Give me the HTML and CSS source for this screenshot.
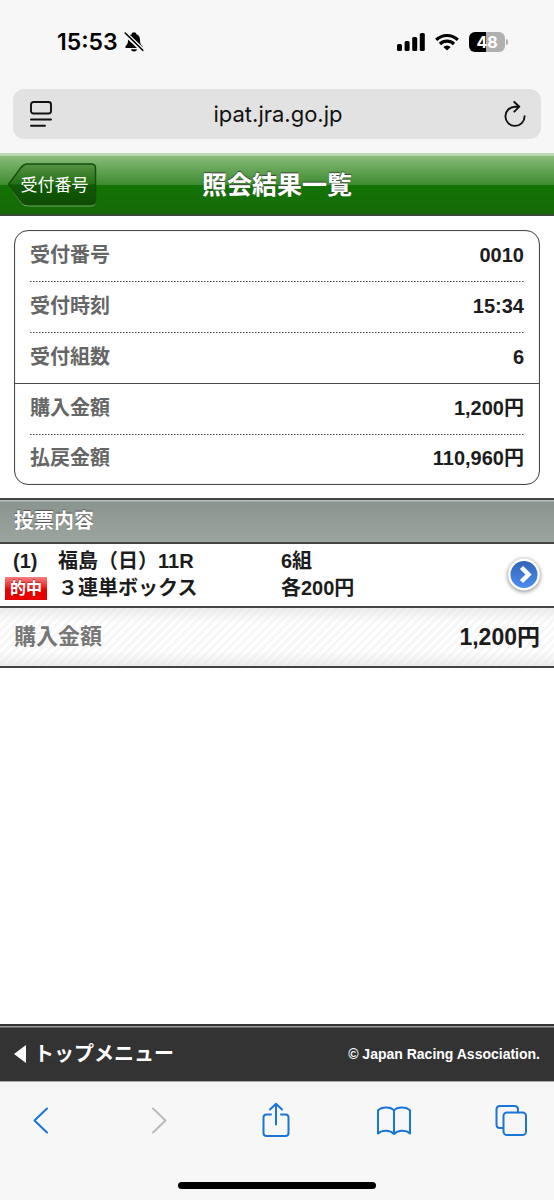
FILE: index.html
```html
<!DOCTYPE html>
<html lang="ja">
<head>
<meta charset="utf-8">
<meta name="viewport" content="width=device-width, initial-scale=1">
<title>照会結果一覧</title>
<link rel="stylesheet" href="styles.css">
</head>
<body class="screen">
<div class="status">
  <div class="status-group">
    <span class="clock">15:53</span>
    <svg class="bell" width="20" height="22" viewBox="0 0 20 22" aria-hidden="true">
      <path d="M10 1.200c-1.300 0-2.200.8-2.400 2C5 4 4 6.200 4 9c0 3.400-.8 4.600-2.300 6-.9.900-.6 2 .6 2h15.400c1.200 0 1.500-1.100.6-2-1.500-1.400-2.300-2.600-2.300-6 0-2.800-1-5-3.600-5.800-.2-1.200-1.100-2-2.400-2z"/>
      <path d="M7 18.300h6c-.3 1.500-1.400 2.200-3 2.200s-2.700-.7-3-2.200z"/>
      <path d="M1 2.500 19 19.500" stroke="#f7f7f7" stroke-width="4.500"/>
      <path d="M1.200 2 18.800 19.300" stroke="#000" stroke-width="1.600" stroke-linecap="round"/>
    </svg>
  </div>
  <div class="status-group status-right">
    <svg width="28" height="18" viewBox="0 0 28 18" aria-hidden="true">
      <rect x="0" y="11" width="5" height="7" rx="1.500"/><rect x="7.600" y="8" width="5" height="10" rx="1.500"/><rect x="15.200" y="4" width="5" height="14" rx="1.500"/><rect x="22.800" y="0" width="5" height="18" rx="1.500"/>
    </svg>
    <svg width="24" height="18" viewBox="0 0 24 18" aria-hidden="true">
      <g fill="none" stroke="#000" stroke-width="3.200"><path d="M1.200 6.900a15.500 15.500 0 0 1 21.600 0"/><path d="M5 11a10 10 0 0 1 14 0"/></g>
      <path d="M12 17.600 8.300 14a5.300 5.300 0 0 1 7.400 0z"/>
    </svg>
    <div class="battery"><span class="battery-level">48</span><span class="battery-cap"></span></div>
  </div>
</div>
<div class="address">
  <button class="plain" aria-label="ページ設定">
    <svg width="22" height="26" viewBox="0 0 22 26" fill="none" stroke="#111" stroke-width="1.900" stroke-linecap="round"><rect x="1" y="1" width="20" height="11.500" rx="2.500"/><path d="M1 18.500h20M1 24.800h14"/></svg>
  </button>
  <span class="domain">ipat.jra.go.jp</span>
  <button class="plain" aria-label="再読み込み">
    <svg width="22" height="26" viewBox="0 0 22 26" fill="none" stroke="#111" stroke-width="1.900" stroke-linecap="round" stroke-linejoin="round"><path d="M14.800 5.700H11A9.600 9.600 0 1 0 20.600 15.300M10.300 1l5 4.700-5 5"/></svg>
  </button>
</div>
<header class="titlebar">
  <button class="back">
    <svg class="back-shape" width="90" height="44" viewBox="0 0 90 44" aria-hidden="true">
      <defs><linearGradient id="back-fill" x2="0" y2="1"><stop offset="0" stop-color="#579345"/><stop offset=".5" stop-color="#236f12"/><stop offset=".51" stop-color="#125a06"/><stop offset="1" stop-color="#0d4c04"/></linearGradient></defs>
      <path d="M2 22.500 14 5.500Q17 2 20 2H84Q88.500 2 88.500 6V38.500Q88.500 43 84 43H20Q17 43 14 39.500Z" fill="none" stroke="#75aa65" stroke-width="1"/>
      <path d="M1.500 21.500 14 4.500Q17 1 20 1H84Q88.500 1 88.500 5V37.500Q88.500 41.500 84 41.500H20Q17 41.500 14 38Z" fill="url(#back-fill)" stroke="#174d0d" stroke-width="1.500"/>
    </svg>
    <span class="back-label">受付番号</span>
  </button>
  <h1 class="title">照会結果一覧</h1>
</header>
<main class="content">
  <dl class="summary">
    <div class="item"><dt class="key">受付番号</dt><dd class="value">0010</dd></div>
    <div class="item"><dt class="key">受付時刻</dt><dd class="value">15:34</dd></div>
    <div class="item"><dt class="key">受付組数</dt><dd class="value">6</dd></div>
    <div class="item item-split"><dt class="key">購入金額</dt><dd class="value">1,200円</dd></div>
    <div class="item"><dt class="key">払戻金額</dt><dd class="value">110,960円</dd></div>
  </dl>
  <h2 class="section">投票内容</h2>
  <a class="bet" href="#">
    <span class="bet-mark"><span class="bet-number">(1)</span><span class="hit">的中</span></span>
    <span class="bet-name"><span>福島（日）11R</span><span>３連単ボックス</span></span>
    <span class="bet-stake"><span>6組</span><span>各200円</span></span>
    <svg class="go" width="38" height="38" viewBox="0 0 38 38" aria-hidden="true">
      <defs><linearGradient id="go-fill" x2="0" y2="1"><stop offset="0" stop-color="#3364b8"/><stop offset="1" stop-color="#4b8df0"/></linearGradient></defs>
      <circle cx="19" cy="18.500" r="16" fill="#fff"/>
      <circle cx="19" cy="18.500" r="13.500" fill="url(#go-fill)"/>
      <path d="M16.500 11.500 23.500 18.500 16.500 25.500" fill="none" stroke="#fff" stroke-width="4.500"/>
    </svg>
  </a>
  <div class="total"><span class="total-key">購入金額</span><span>1,200円</span></div>
</main>
<footer class="footer">
  <a class="top-link" href="#"><svg width="12" height="18" viewBox="0 0 12 18" aria-hidden="true"><path d="M0 9 12 0v18z" fill="#fff"/></svg>トップメニュー</a>
  <small class="copyright">© Japan Racing Association.</small>
</footer>
<nav class="toolbar">
  <button class="plain" aria-label="戻る"><svg width="34" height="36" viewBox="0 0 34 36"><path d="M23 6.500 10.500 18.500 23 30.500"/></svg></button>
  <button class="plain" aria-label="進む" disabled><svg width="34" height="36" viewBox="0 0 34 36"><path d="M11 6.500 23.500 18.500 11 30.500"/></svg></button>
  <button class="plain" aria-label="共有"><svg width="34" height="36" viewBox="0 0 34 36"><path d="M12 12.500H7.500q-3 0-3 3V31q0 3 3 3h19q3 0 3-3V15.500q0-3-3-3H22M17 22.500V2M11 7.500l6-5.700 6 5.700"/></svg></button>
  <button class="plain" aria-label="ブックマーク"><svg width="34" height="36" viewBox="0 0 34 36"><path d="M17 8.500C14 4.500 4.500 4.500 1 8.500V31.500C5 27.800 13 27.800 17 32 21 27.800 29 27.800 33 31.500V8.500C29.500 4.500 20 4.500 17 8.500ZM17 8.500V32"/></svg></button>
  <button class="plain" aria-label="タブ"><svg width="34" height="36" viewBox="0 0 34 36"><path d="M9 26H6q-3.500 0-3.500-3.500V7.500Q2.500 4 6 4H20.500Q24 4 24 7.500V10.500"/><rect x="9.500" y="10.500" width="22.500" height="22.500" rx="3.500"/></svg></button>
</nav>
<div class="home"><span class="home-bar"></span></div>
</body>
</html>
```
FILE: styles.css
```css
* { box-sizing: border-box; }

.screen {
  display: flex;
  flex-direction: column;
  min-height: 100vh;
  margin: 0;
  background: #f7f7f7;
  color: #1c1c1c;
  font-family: "Liberation Sans", "Noto Sans CJK JP", sans-serif;
  font-size: 20px;
  font-weight: bold;
}

.plain {
  display: block;
  padding: 0;
  border: 0;
  background: none;
}

.plain svg { display: block; }

.status {
  display: flex;
  justify-content: space-between;
  align-items: center;
  height: 89px;
  padding: 0 49px 6px 57px;
}

.status-group {
  display: flex;
  align-items: center;
  gap: 6px;
}

.status-right { gap: 10px; }

.clock {
  color: #000;
  font: 600 23px/28px Inter, sans-serif;
}

.battery {
  position: relative;
  width: 36px;
  height: 20px;
  border-radius: 6px;
  background: linear-gradient(90deg, #000 48%, #b0b0b0 48%);
  color: #fff;
  font: 700 16px/20px Inter, sans-serif;
  text-align: center;
}

.battery-cap {
  position: absolute;
  top: 7px;
  right: -3px;
  width: 2px;
  height: 6px;
  border-radius: 0 2px 2px 0;
  background: #b0b0b0;
}

.address {
  display: flex;
  justify-content: space-between;
  align-items: center;
  height: 50px;
  margin: 0 13px 14px;
  padding: 0 15px 0 17px;
  border-radius: 11px;
  background: #e2e2e2;
}

.domain {
  color: #111;
  font: 400 22px/28px Inter, sans-serif;
}

.titlebar {
  display: grid;
  grid-template-columns: 1fr auto 1fr;
  align-items: center;
  height: 63px;
  padding: 0 7px;
  border-top: 3px solid #bcd8b2;
  border-bottom: 2px solid #3c4a38;
  background: linear-gradient(#88bc7a, #3d8b2e 50%, #137404 50%, #166909);
  color: #fff;
}

.back {
  position: relative;
  justify-self: start;
  width: 90px;
  height: 44px;
  padding: 0 0 2px 5px;
  border: 0;
  background: none;
  color: #fff;
  font: 400 17px/24px "Noto Sans CJK JP", sans-serif;
}

.back-shape {
  position: absolute;
  top: 0;
  left: 0;
}

.back-label { position: relative; }

.title {
  margin: 0;
  font-size: 25px;
  line-height: 36px;
  text-shadow: 0 -1px 1px #444;
}

.content {
  flex: 1;
  background: #fff;
}

.summary {
  margin: 14px 14px 13px;
  border: 1px solid #4a4a4a;
  border-radius: 14px;
  box-shadow: inset 0 0 1px #777;
}

.item {
  display: flex;
  justify-content: space-between;
  align-items: center;
  height: 51px;
  margin: 0 15px;
  padding-bottom: 2px;
  background: repeating-linear-gradient(90deg, #444 0 1px, #fff 2px 3px) top / 100% 1px no-repeat;
  line-height: 30px;
}

.item:first-child {
  height: 50px;
  background: none;
}

.item-split {
  margin: 0;
  padding: 0 15px 2px;
  background: none;
  border-top: 1px solid #4a4a4a;
}

.item:last-child { height: 50px; }

.key { color: #666; }

.value { margin: 0; }

.section {
  margin: 0;
  padding: 7px 14px;
  border-top: 2px solid #444;
  border-bottom: 2px solid #444;
  background: linear-gradient(#b5bdb8 1px, #8b958f 2px, #9ba49e);
  color: #fff;
  font-size: 20px;
  line-height: 28px;
  text-shadow: 0 -1px 1px #555;
}

.bet {
  display: grid;
  grid-template-columns: 53px 223px 1fr auto;
  align-items: center;
  height: 62px;
  padding: 0 11px 0 5px;
  color: #1c1c1c;
  line-height: 27px;
  text-decoration: none;
}

.bet-mark,
.bet-name,
.bet-stake {
  display: flex;
  flex-direction: column;
  align-items: flex-start;
}

.bet-number { padding-left: 8px; }

.hit {
  margin: 2px 0;
  padding: 0 5px;
  background: linear-gradient(#f68080, #f02020 45%, #e60000 55%, #e60000);
  color: #fff;
  font-size: 16px;
  line-height: 23px;
  text-shadow: 0 -1px 1px #a33;
}

.go { filter: drop-shadow(0 1px 2px #777); }

.total {
  display: flex;
  justify-content: space-between;
  align-items: center;
  padding: 12px 14px;
  border-top: 2px solid #444;
  border-bottom: 2px solid #444;
  background:
    linear-gradient(#ddd8, #fff0 25%, #fff0 75%, #ddd8),
    repeating-linear-gradient(135deg, #fff 0 2px, #f7f7f7 3px 5px, #fff 6px);
  font-size: 23px;
  line-height: 34px;
}

.total-key {
  color: #777;
  font-size: 22px;
}

.footer {
  display: flex;
  justify-content: space-between;
  align-items: center;
  height: 58px;
  padding: 0 14px;
  border-top: 2px solid #333;
  border-bottom: 1px solid #aaa;
  background: linear-gradient(#999 1px, #333 2px);
  color: #fff;
}

.top-link {
  display: flex;
  align-items: center;
  gap: 8px;
  color: #fff;
  line-height: 30px;
  text-decoration: none;
}

.copyright { font-size: 14px; }

.toolbar {
  display: flex;
  justify-content: space-between;
  padding: 20px 26px 0 24px;
}

.toolbar svg {
  fill: none;
  stroke: #1a75d6;
  stroke-width: 2;
  stroke-linecap: round;
  stroke-linejoin: round;
}

.toolbar :disabled svg { stroke: #bbb; }

.home {
  display: flex;
  justify-content: center;
  height: 62px;
  padding-top: 44px;
}

.home-bar {
  width: 198px;
  height: 7px;
  border-radius: 4px;
  background: #000;
}
```
